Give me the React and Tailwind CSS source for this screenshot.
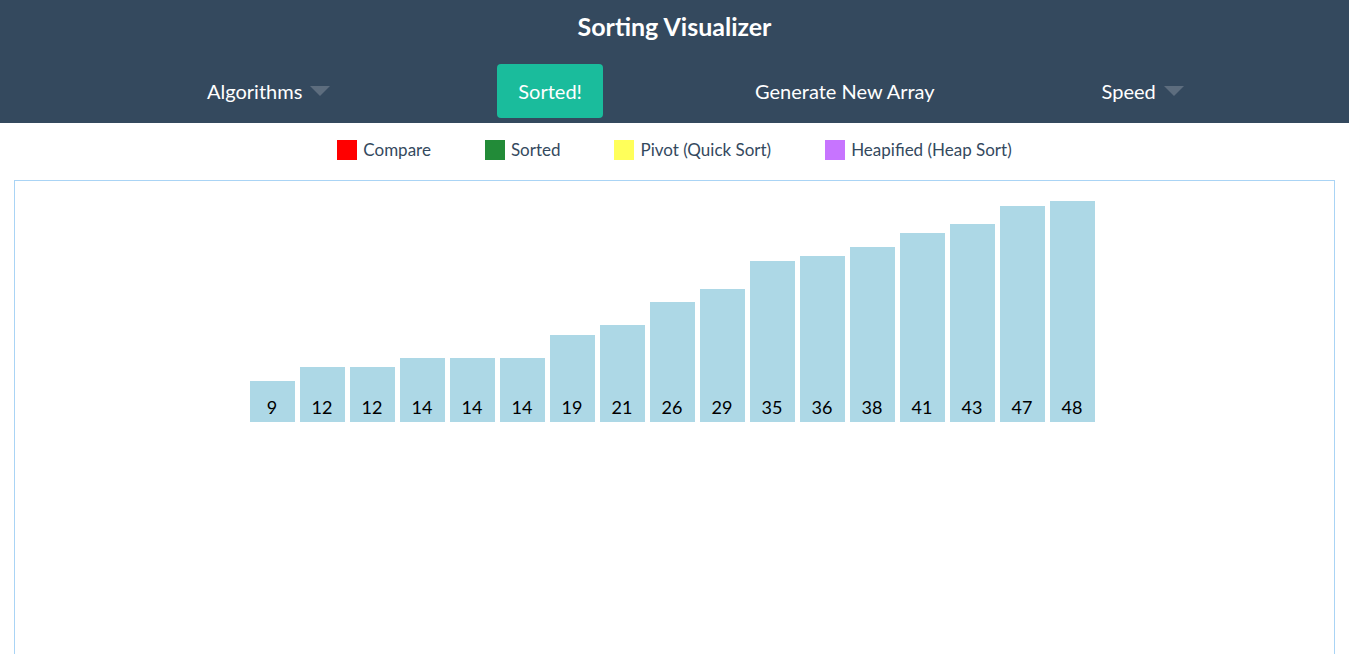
import React from "react";

const values = [9, 12, 12, 14, 14, 14, 19, 21, 26, 29, 35, 36, 38, 41, 43, 47, 48];

function Caret() {
  return (
    <svg width="20" height="10" viewBox="0 0 20 10" className="block">
      <polygon points="0,0 20,0 10,10" fill="#5d6d7e" />
    </svg>
  );
}

function Legend({ color, label }) {
  return (
    <div className="flex items-center gap-[6px]">
      <div className={`w-[20px] h-[20px] ${color}`} />
      <span className="text-[17px] leading-[20px] text-[#34495e]">{label}</span>
    </div>
  );
}

export default function App() {
  return (
    <div className="min-h-screen bg-white" style={{ fontFamily: "Lato, 'Noto Sans', sans-serif" }}>
      <header className="bg-[#34495e] text-white">
        <div className="h-[52px] flex items-center justify-center">
          <h1 className="text-[25px] font-bold leading-none">Sorting Visualizer</h1>
        </div>
        <nav className="flex items-center pt-[12px] pb-[5px] pl-[207px]">
          <div className="flex items-center gap-[8px]">
            <span className="text-[20px]">Algorithms</span>
            <Caret />
          </div>
          <button className="ml-[167px] h-[54px] px-[21px] rounded-[4px] bg-[#1abc9c] text-[20px] text-white">
            Sorted!
          </button>
          <span className="ml-[152px] text-[20px]">Generate New Array</span>
          <div className="ml-[167px] flex items-center gap-[8px]">
            <span className="text-[20px]">Speed</span>
            <Caret />
          </div>
        </nav>
      </header>
      <div className="flex items-center justify-center gap-[54px] pt-[17px] pb-[20px]">
        <Legend color="bg-[#ff0000]" label="Compare" />
        <Legend color="bg-[#228b38]" label="Sorted" />
        <Legend color="bg-[#ffff5a]" label="Pivot (Quick Sort)" />
        <Legend color="bg-[#c774ff]" label="Heapified (Heap Sort)" />
      </div>
      <div className="mx-[14px] h-[600px] border border-[#aad4f5] pt-[20px]">
        <div className="flex justify-center items-end h-[221px]">
          {values.map((v, i) => (
            <div
              key={i}
              className="w-[45px] mr-[5px] bg-[#add8e6] flex items-end justify-center"
              style={{ height: `${v * 4.6}px` }}
            >
              <span className="text-[18px] leading-[27px] pb-[1px] text-black">{v}</span>
            </div>
          ))}
        </div>
      </div>
    </div>
  );
}
